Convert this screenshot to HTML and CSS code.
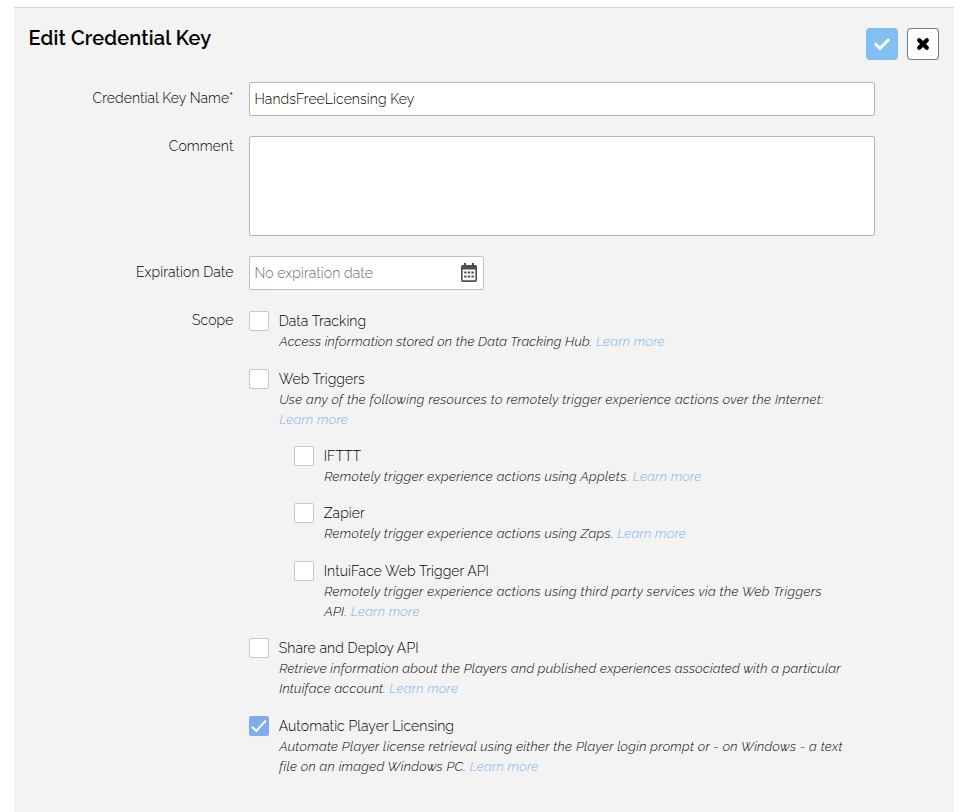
FILE: index.html
```html
<!DOCTYPE html>
<html lang="en">
<head>
<meta charset="utf-8">
<title>Edit Credential Key</title>
<link rel="stylesheet" href="styles.css">
</head>
<body>
<form class="panel">
  <header class="head">
    <h1>Edit Credential Key</h1>
    <div class="actions">
      <button type="button" class="btn btn-save"><svg viewBox="0 0 32 32" width="32" height="32"><path d="M9.7 16.2L14 20.3L22.3 12" fill="none" stroke="#fff" stroke-width="3" stroke-linecap="round"/></svg></button>
      <button type="button" class="btn btn-close"><svg viewBox="0 0 32 32" width="32" height="32"><path d="M12.2 12.2L19.8 19.8M19.8 12.2L12.2 19.8" fill="none" stroke="#000" stroke-width="4.2" stroke-linecap="round"/></svg></button>
    </div>
  </header>

  <div class="fields">
    <label>Credential Key Name*</label>
    <div class="input">HandsFreeLicensing Key</div>

    <label class="top">Comment</label>
    <div class="input area"></div>

    <label>Expiration Date</label>
    <div class="input date"><span>No expiration date</span>
      <svg viewBox="0 0 16 19" width="16" height="19"><path fill="#4d4d4d" fill-rule="evenodd" d="M3 0h2v2h6V0h2v2h1.200a1.800 1.800 0 0 1 1.800 1.800v13.400a1.800 1.800 0 0 1-1.800 1.800H1.800A1.800 1.800 0 0 1 0 17.200V3.800A1.800 1.800 0 0 1 1.800 2H3zM1.600 6.500v10.800h12.800V6.500z"/><path fill="#4d4d4d" d="M3.200 8.500h2.400v2H3.200zm3.600 0h2.400v2H6.800zm3.600 0h2.400v2h-2.400zM3.200 12.500h2.400v2H3.200zm3.600 0h2.400v2H6.800zm3.600 0h2.400v2h-2.400z"/></svg>
    </div>

    <label class="top">Scope</label>
    <div class="scopes">
      <div class="scope"><i class="box"></i><div><h2>Data Tracking</h2><p class="tight">Access information stored on the Data Tracking Hub. <a>Learn more</a></p></div></div>
      <div class="scope"><i class="box"></i><div><h2>Web Triggers</h2><p class="loose">Use any of the following resources to remotely trigger experience actions over the Internet:<br><a>Learn more</a></p></div></div>
      <div class="scope sub"><i class="box"></i><div><h2>IFTTT</h2><p class="loose">Remotely trigger experience actions using Applets. <a>Learn more</a></p></div></div>
      <div class="scope sub"><i class="box"></i><div><h2>Zapier</h2><p class="loose">Remotely trigger experience actions using Zaps. <a>Learn more</a></p></div></div>
      <div class="scope sub"><i class="box"></i><div><h2>IntuiFace Web Trigger API</h2><p class="loose">Remotely trigger experience actions using third party services via the Web Triggers<br>API. <a>Learn more</a></p></div></div>
      <div class="scope"><i class="box"></i><div><h2>Share and Deploy API</h2><p class="snug">Retrieve information about the Players and published experiences associated with a particular<br>Intuiface account. <a>Learn more</a></p></div></div>
      <div class="scope"><i class="box checked"><svg viewBox="0 0 20 20" width="20" height="20"><path d="M3 10.700L7.300 15L17 4.300" fill="none" stroke="#fff" stroke-width="2"/></svg></i><div><h2>Automatic Player Licensing</h2><p>Automate Player license retrieval using either the Player login prompt or - on Windows - a text<br>file on an imaged Windows PC. <a>Learn more</a></p></div></div>
    </div>
  </div>
</form>
</body>
</html>
```
FILE: styles.css
```css
* { box-sizing: border-box; }
body {
  margin: 0;
  background: #fff;
  color: #000;
  font: 350 14px/20px Raleway, Lato, sans-serif;
  letter-spacing: 0.080px;
}
h1, h2, p { margin: 0; }
.panel {
  margin: 7px 16px 0 14px;
  height: 805px;
  padding: 20px 15px 0 14.500px;
  background: #f3f3f3;
  border-top: 1px solid #d5d5d5;
}
.head { display: flex; justify-content: space-between; height: 54px; }
h1 { font-size: 20px; font-weight: 600; line-height: 20px; letter-spacing: 0.150px; color: #000; }
.actions { display: flex; gap: 9px; }
.btn {
  width: 32px;
  height: 32px;
  padding: 0;
  border: 0;
  border-radius: 4px;
  background: #82c0f4;
}
.btn svg { display: block; }
.btn-close { background: #fff; box-shadow: inset 0 0 0 1px #777; }

.fields {
  display: grid;
  grid-template-columns: 205px 626px;
  column-gap: 15.500px;
  row-gap: 20px;
}
.fields > label { text-align: right; padding-top: 6px; }
.fields > .top { padding-top: 0; }
.input {
  height: 34px;
  padding: 0 5px 0 4.500px;
  display: flex;
  align-items: center;
  background: #fff;
  border: 1px solid #b5b5b5;
  border-radius: 2px;
}
.area { height: 100px; }
.date { width: 235px; padding-right: 6px; justify-content: space-between; color: #6c6c6c; border-color: #c0c0c0; }
.date svg { margin-top: -2px; }
.scopes { display: flex; flex-direction: column; gap: 17.400px; padding-top: 1.200px; }
.scope { display: flex; gap: 9.700px; }
.sub { margin-left: 45px; }
.box {
  flex: none;
  width: 20px;
  height: 20px;
  background: #fff;
  border: 1px solid #c6c6c6;
  border-radius: 2px;
}
.checked { border: 0; background: #7dadea; }
.checked svg { display: block; }
h2 { font-size: 14px; font-weight: 350; line-height: 20px; }
p {
  padding: 1px 0 0 0.500px;
  margin-bottom: -1px;
  font-size: 13px;
  font-style: italic;
  letter-spacing: 0.320px;
  color: #000;
  white-space: nowrap;
}
.tight { letter-spacing: 0.240px; }
.snug { letter-spacing: 0.270px; }
.loose { letter-spacing: 0.363px; }
a { color: #75b1f0; letter-spacing: 0.280px; }
```
